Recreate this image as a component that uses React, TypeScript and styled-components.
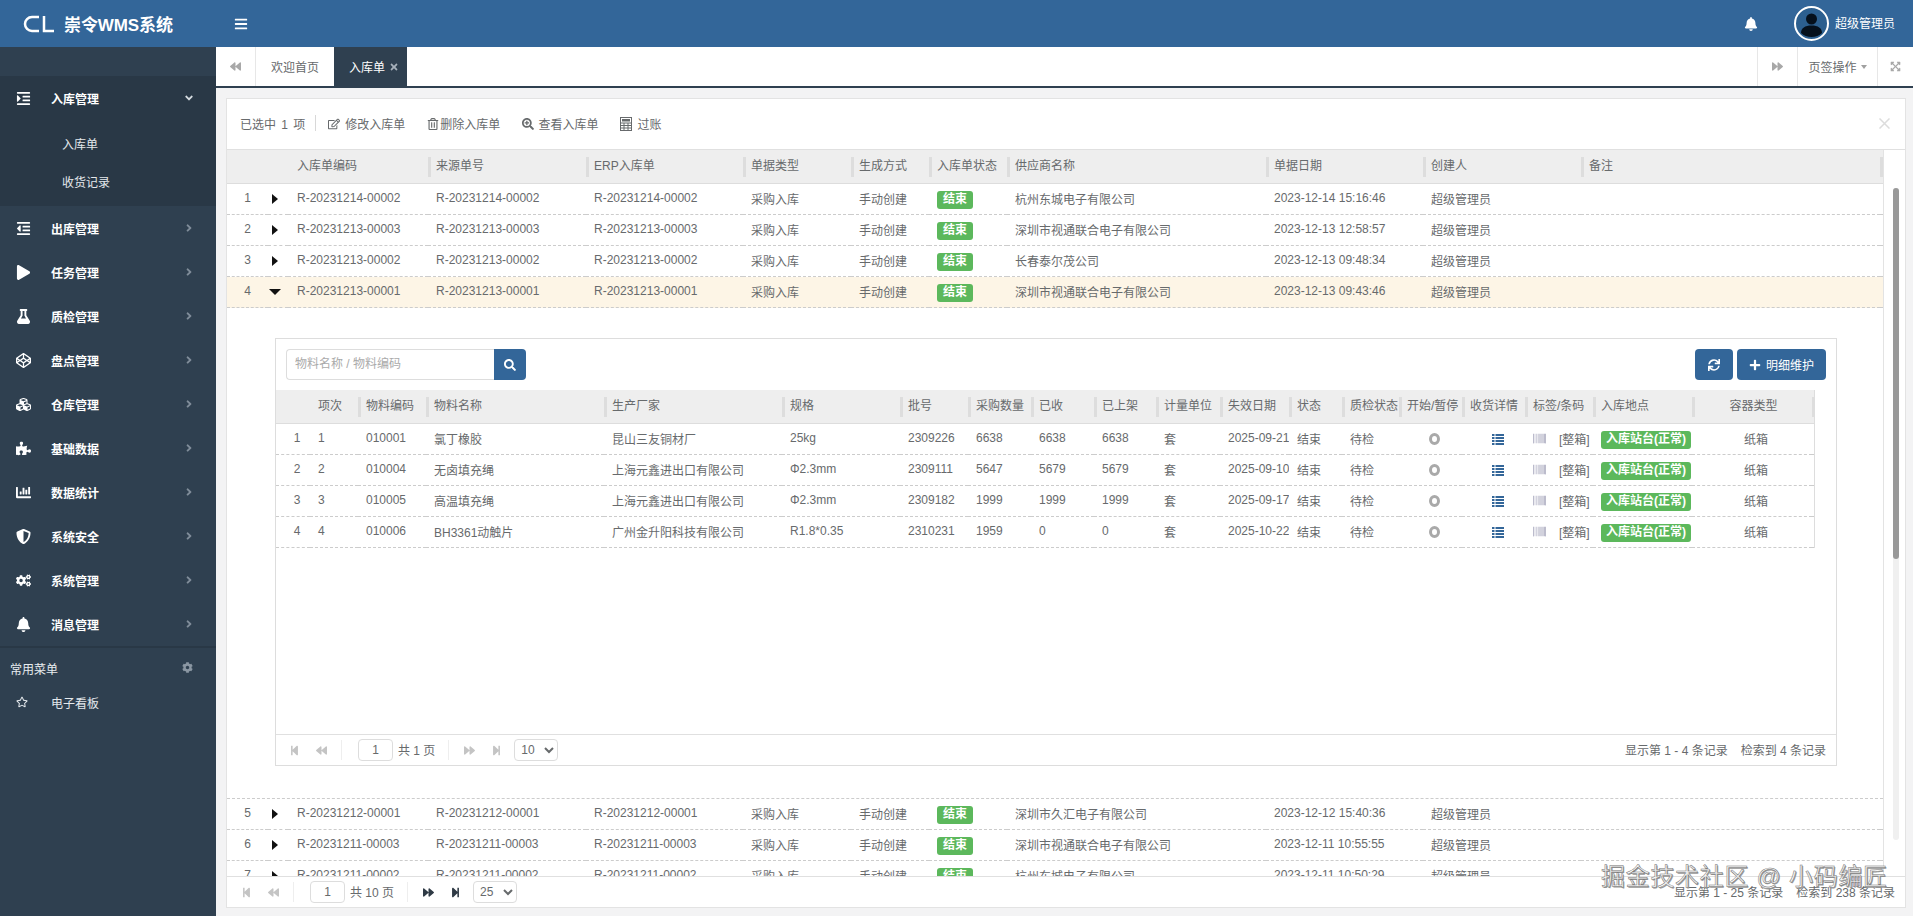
import React from "react";
import styled, { createGlobalStyle } from "styled-components";
import {
  FaAngleDown, FaAngleRight, FaBackward, FaBars, FaBarcode, FaBell, FaChartBar, FaCodepen, FaCog, FaCogs,
  FaCubes, FaExpandArrowsAlt, FaFlask, FaForward, FaIndent, FaOutdent, FaPlay, FaPlus, FaPuzzlePiece, FaRegEdit,
  FaRegStar, FaRegTrashAlt, FaSearch, FaSearchPlus, FaShieldAlt, FaStepBackward, FaStepForward, FaSync, FaTimes,
} from "react-icons/fa";

const Global = createGlobalStyle`
  html, body { margin: 0; height: 100%; overflow: hidden; }
  body { font-family: "Liberation Sans", "Noto Sans CJK SC", sans-serif; font-size: 12px; color: #676a6c; background: #f3f3f4; }
  #root { height: 100%; }
  * { box-sizing: border-box; }
`;

const Page = styled.div`display: flex; flex-direction: column; height: 916px; position: relative;`;
const TopBar = styled.header`height: 47px; flex: none; background: #336699; display: flex; align-items: center; color: #fff;`;
const Brand = styled.div`width: 216px; padding-left: 23px; display: flex; align-items: center; gap: 9px; font-size: 17px; font-weight: 700; letter-spacing: -0.1px;`;
const Burger = styled.span`margin-left: 18px; display: flex; font-size: 14px;`;
const Grow = styled.div`flex: 1;`;
const BellBox = styled.span`display: flex; font-size: 14px; margin-right: 36px;`;
const UserName = styled.span`margin: 0 18px 3px 6px;`;
const Body = styled.div`flex: 1; min-height: 0; display: flex;`;

const Side = styled.nav`width: 216px; flex: none; background: #2f4050; padding-top: 29px; color: #fff;`;
const NavItem = styled.div<{ $dark?: boolean }>`
  height: 44px; display: flex; align-items: center; padding-left: 16px; font-weight: 700;
  background: ${(p) => (p.$dark ? "#293846" : "transparent")};
`;
const NavIcon = styled.span`width: 35px; flex: none; display: flex; font-size: 15px;`;
const NavLabel = styled.span`flex: 1;`;
const NavArrow = styled.span<{ $open?: boolean }>`display: flex; width: 33px; font-size: 12px; color: ${(p) => (p.$open ? "#d5dbe0" : "#7f8c99")};`;
const SubList = styled.div`background: #293846; padding: 6px 0 4px;`;
const SubItem = styled.div`height: 38px; line-height: 38px; padding-left: 62px; color: #e4e8ec;`;
const SideDivider = styled.div`height: 2px; background: #293846;`;
const FavHead = styled.div`height: 40px; display: flex; align-items: center; justify-content: space-between; padding: 0 23px 0 10px; color: #e8ecef;`;
const FavGear = styled.span`display: flex; font-size: 11px; color: #8b97a3; margin-bottom: 2px;`;
const FavItem = styled.div`height: 28px; display: flex; align-items: center; padding-left: 16px; color: #e4e8ec;`;
const FavIcon = styled(NavIcon)`font-size: 12px;`;

const Main = styled.main`flex: 1; min-width: 0; display: flex; flex-direction: column;`;
const Tabs = styled.div`height: 41px; flex: none; background: #fff; border-bottom: 2px solid #2f4050; display: flex;`;
const TabEdge = styled.div<{ $w: number; $left?: boolean }>`
  width: ${(p) => p.$w}px; display: flex; align-items: center; justify-content: center; gap: 4px; color: #a8a8a8; font-size: 11px;
  border-${(p) => (p.$left ? "left" : "right")}: 1px solid #e7e7e7;
`;
const TabLabel = styled.span`font-size: 12px; color: #676a6c;`;
const Caret = styled.span`width: 0; height: 0; border: 3px solid transparent; border-top: 4px solid #a0a0a0; border-bottom: 0;`;
const Tab = styled.div`width: 78px; padding-left: 15px; display: flex; align-items: center;`;
const ActiveTab = styled.div`width: 73px; padding-left: 15px; display: flex; align-items: center; gap: 4px; background: #2f4050; color: #fff;`;
const TabClose = styled.span`display: flex; font-size: 10px; color: #a7b1bb;`;

const Content = styled.div`flex: 1; min-height: 0; padding: 10px 7px 8px 10px; display: flex;`;
const Card = styled.section`flex: 1; min-width: 0; background: #fff; border: 1px solid #e3e3e3; display: flex; flex-direction: column;`;
const Toolbar = styled.div`height: 51px; flex: none; border-bottom: 1px solid #e0e0e0; display: flex; align-items: center; padding: 0 15px 2px 13px; gap: 22px;`;
const Selected = styled.div`display: flex; align-items: center; word-spacing: 2px; margin-right: -10px;`;
const ToolSep = styled.span`width: 1px; height: 16px; background: #d8d8d8; margin-left: 10px;`;
const ToolBtn = styled.span`display: flex; align-items: center;`;
const ToolIcon = styled.span<{ $gap: number }>`display: flex; font-size: 12px; color: #676a6c; margin: 2px ${(p) => p.$gap}px 0 0;`;
const CardClose = styled.svg`margin-left: auto; width: 11px; height: 11px; stroke: #dcdcdc; stroke-width: 1.5; fill: none;`;
const TableArea = styled.div`flex: 1; min-height: 0; display: flex;`;
const TableClip = styled.div`width: 1656px; flex: none; overflow: hidden;`;
const Table = styled.table<{ $w: number }>`width: ${(p) => p.$w}px; table-layout: fixed; border-collapse: separate; border-spacing: 0;`;
const Th = styled.th`height: 34px; padding: 0; background: #eee; border-bottom: 1px solid #ddd; font-weight: 400; text-align: left; color: #676a6c; overflow: hidden; white-space: nowrap;`;
const HeadLabel = styled.span<{ $sep?: boolean; $center?: boolean; $pad?: number }>`
  display: block; height: 20px; line-height: 18px;
  padding-left: ${(p) => p.$pad ?? 5}px;
  border-left: ${(p) => (p.$sep ? "3px solid #ddd" : "0")};
  text-align: ${(p) => (p.$center ? "center" : "left")};
`;
const Tr = styled.tr<{ $active?: boolean }>`background: ${(p) => (p.$active ? "#fdf5e6" : "transparent")};`;
const Td = styled.td<{ $center?: boolean; $pad?: number }>`
  height: 31px; padding: 0 0 2px ${(p) => p.$pad ?? 8}px; border-bottom: 1px dashed #ccc; white-space: nowrap; overflow: hidden;
  text-align: ${(p) => (p.$center ? "center" : "left")};
`;
const Expander = styled.span<{ $open?: boolean }>`
  display: block; width: 0; height: 0; border-style: solid; margin-top: 2px;
  border-color: ${(p) => (p.$open ? "#111 transparent transparent" : "transparent transparent transparent #111")};
  border-width: ${(p) => (p.$open ? "6px 6px 0" : "5px 0 5px 6px")};
  margin-left: ${(p) => (p.$open ? 1 : 4)}px;
`;
const Badge = styled.span<{ $w: number }>`
  display: block; width: ${(p) => p.$w}px; height: 18px; line-height: 17px; margin-top: 4px; text-align: center; background: #5cb85c; color: #fff;
  font-weight: 700; border-radius: 3px;
`;
const Gutter = styled.div`flex: 1; border-left: 1px solid #e3e3e3; padding: 38px 0 36px 9px; display: flex;`;
const Track = styled.div`width: 6px; background: #f0f0f0; border-radius: 3px;`;
const Thumb = styled.div`background: #999; border-radius: 3px;`;
const DetailCell = styled.td`padding: 30px 46px 32px 48px; border-bottom: 1px dashed #ccc;`;
const Detail = styled.div`height: 428px; border: 1px solid #ddd; display: flex; flex-direction: column;`;
const DetailBar = styled.div`height: 51px; flex: none; padding: 10px 10px 0 10px; display: flex; justify-content: space-between;`;
const SearchGroup = styled.div`display: flex; height: 31px;`;
const SearchInput = styled.input`
  width: 208px; border: 1px solid #ddd; border-right: 0; border-radius: 4px 0 0 4px; padding: 0 8px 2px; font: inherit; outline: 0;
  &::placeholder { color: #aaa; opacity: 1; }
`;
const Primary = styled.span<{ $w: number; $round?: boolean }>`
  width: ${(p) => p.$w}px; height: 31px; background: #336699; color: #fff; display: flex; align-items: center; justify-content: center; gap: 5px;
  border-radius: ${(p) => (p.$round ? "4px" : "0 4px 4px 0")}; font-size: 12px;
`;
const BtnGroup = styled.div`display: flex; gap: 4px;`;
const DetailBody = styled.div`flex: 1; min-height: 0;`;
const InnerTable = styled(Table)`border-right: 1px solid #ddd;`;
const Ring = styled.span`display: inline-block; width: 11px; height: 12px; margin-top: 2px; border: 3px solid #a9a9a9; border-radius: 50%; vertical-align: middle;`;
const ListIcon = styled.span`display: inline-flex; margin-top: 2px; color: #336699; vertical-align: middle;`;
const BarcodeWrap = styled.span`display: flex; align-items: center; gap: 13px;`;
const BarcodeIcon = styled.span`display: flex; font-size: 13px; color: #9d9db5;`;

const PageBar = styled.div<{ $pad: number }>`
  height: 31px; flex: none; border-top: 1px solid #e0e0e0; display: flex; align-items: center;
  padding: 0 10px 0 ${(p) => p.$pad}px;
`;
const PageBtn = styled.span<{ $on?: boolean }>`width: 27px; display: flex; justify-content: center; font-size: 11px; color: ${(p) => (p.$on ? "#2f3a45" : "#c4c4c4")};`;
const PageSep = styled.span<{ $l: number }>`width: 1px; height: 20px; background: #eee; margin: 0 7px 0 ${(p) => p.$l}px;`;
const PageInput = styled.input`width: 35px; height: 22px; margin-left: 9px; border: 1px solid #ddd; border-radius: 4px; text-align: center; font: inherit; color: #676a6c; padding: 0; outline: 0;`;
const PageTotal = styled.span`margin: 0 0 2px 5px;`;
const PageSelect = styled.select`width: 44px; height: 22px; margin-left: 4px; border: 1px solid #ddd; border-radius: 4px; background: #fff; font: inherit; color: #676a6c; padding: 0 0 0 2px; outline: 0;`;
const PageInfo = styled.span`margin: 0 0 2px auto; display: flex; gap: 13px;`;

const Watermark = styled.div`
  position: absolute; left: 1601px; top: 863px; font-size: 24px; line-height: 28px; letter-spacing: 0.7px; white-space: nowrap;
  color: rgba(255, 255, 255, 0.8); -webkit-text-stroke: 0.5px #707070; text-shadow: 1px 1px 0 #999;
`;

const CLLogo = () => (
  <svg width="32" height="18" viewBox="0 0 32 18" fill="none" stroke="#fff" strokeWidth="2.5">
    <path d="M16 2H9a7 7 0 0 0 0 14h7" />
    <path d="M21 1v15h10" />
  </svg>
);
const Avatar = () => (
  <svg width="35" height="35" viewBox="0 0 35 35">
    <circle cx="17.5" cy="17.5" r="16.5" fill="#2c5f8f" stroke="#fff" strokeWidth="2" />
    <circle cx="17.5" cy="13" r="5.5" fill="#05101c" />
    <path d="M7 27c0-5 4-7.500 10.500-7.500S28 22 28 27c-2.500 2.500-6.500 4-10.500 4S9.500 29.500 7 27z" fill="#05101c" />
  </svg>
);
const CalcIcon = () => (
  <svg width="12" height="14" viewBox="0 0 12 14" fill="none" stroke="#676a6c" strokeWidth="1">
    <rect x="0.5" y="0.5" width="11" height="13" />
    <rect x="2" y="2" width="8" height="2.500" fill="#676a6c" stroke="none" />
    <path d="M0.500 6h11M0.500 8.500h11M0.500 11h11M4 6v7.500M8 6v7.500" />
  </svg>
);
const StripeList = () => (
  <svg width="12" height="11" viewBox="0 0 12 11" fill="currentColor">
    <path d="M0 0h2.500v2H0zM3.500 0H12v2H3.500zM0 3h2.500v2H0zM3.500 3H12v2H3.500zM0 6h2.500v2H0zM3.500 6H12v2H3.500zM0 9h2.500v2H0zM3.500 9H12v2H3.500z" />
  </svg>
);

const navItems: [string, React.ReactNode][] = [
  ["任务管理", <FaPlay />], ["质检管理", <FaFlask />], ["盘点管理", <FaCodepen />], ["仓库管理", <FaCubes />], ["基础数据", <FaPuzzlePiece />],
  ["数据统计", <FaChartBar />], ["系统安全", <FaShieldAlt />], ["系统管理", <FaCogs />], ["消息管理", <FaBell />],
];

const mainCols = [41, 20, 140, 158, 157, 108, 78, 78, 259, 157, 158, 299, 3];
const mainHeads = ["入库单编码", "来源单号", "ERP入库单", "单据类型", "生成方式", "入库单状态", "供应商名称", "单据日期", "创建人", "备注"];
const orders: [string, string, string][] = [
  ["R-20231214-00002", "杭州东城电子有限公司", "2023-12-14 15:16:46"],
  ["R-20231213-00003", "深圳市视通联合电子有限公司", "2023-12-13 12:58:57"],
  ["R-20231213-00002", "长春泰尔茂公司", "2023-12-13 09:48:34"],
  ["R-20231213-00001", "深圳市视通联合电子有限公司", "2023-12-13 09:43:46"],
  ["R-20231212-00001", "深圳市久汇电子有限公司", "2023-12-12 15:40:36"],
  ["R-20231211-00003", "深圳市视通联合电子有限公司", "2023-12-11 10:55:55"],
  ["R-20231211-00002", "杭州东城电子有限公司", "2023-12-11 10:50:29"],
];

const innerCols = [34, 48, 68, 178, 178, 118, 68, 63, 63, 62, 64, 69, 53, 57, 63, 63, 68, 99, 120, 2];
const innerHeads = ["项次", "物料编码", "物料名称", "生产厂家", "规格", "批号", "采购数量", "已收", "已上架", "计量单位", "失效日期", "状态", "质检状态", "开始/暂停", "收货详情", "标签/条码", "入库地点"];
const items = [
  ["010001", "氯丁橡胶", "昆山三友铜材厂", "25kg", "2309226", "6638", "6638", "6638", "2025-09-21"],
  ["010004", "无卤填充绳", "上海元鑫进出口有限公司", "Φ2.3mm", "2309111", "5647", "5679", "5679", "2025-09-10"],
  ["010005", "高温填充绳", "上海元鑫进出口有限公司", "Φ2.3mm", "2309182", "1999", "1999", "1999", "2025-09-17"],
  ["010006", "BH3361动触片", "广州金升阳科技有限公司", "R1.8*0.35", "2310231", "1959", "0", "0", "2025-10-22"],
];

const Colgroup = ({ widths }: { widths: number[] }) => (
  <colgroup>{widths.map((w, i) => <col key={i} width={w} />)}</colgroup>
);

const Pager = ({ pad, total, size, on, info }: { pad: number; total: string; size: number; on?: boolean; info: [string, string] }) => (
  <PageBar $pad={pad}>
    <PageBtn><FaStepBackward /></PageBtn>
    <PageBtn><FaBackward /></PageBtn>
    <PageSep $l={6} />
    <PageInput defaultValue="1" />
    <PageTotal>{total}</PageTotal>
    <PageSep $l={13} />
    <PageBtn $on={on}><FaForward /></PageBtn>
    <PageBtn $on={on}><FaStepForward /></PageBtn>
    <PageSelect defaultValue={size}><option>{size}</option></PageSelect>
    <PageInfo><span>{info[0]}</span><span>{info[1]}</span></PageInfo>
  </PageBar>
);

const DetailPanel = () => (
  <Detail>
    <DetailBar>
      <SearchGroup>
        <SearchInput placeholder="物料名称 / 物料编码" />
        <Primary $w={32}><FaSearch /></Primary>
      </SearchGroup>
      <BtnGroup>
        <Primary $w={38} $round><FaSync /></Primary>
        <Primary $w={89} $round><FaPlus />明细维护</Primary>
      </BtnGroup>
    </DetailBar>
    <DetailBody>
      <InnerTable $w={1539}>
        <Colgroup widths={innerCols} />
        <thead>
          <tr>
            <Th />
            {innerHeads.map((h, i) => <Th key={h}><HeadLabel $sep={i > 0} $pad={i > 0 ? 5 : 8}>{h}</HeadLabel></Th>)}
            <Th><HeadLabel $sep $center $pad={0}>容器类型</HeadLabel></Th>
            <Th><HeadLabel $sep $pad={0} /></Th>
          </tr>
        </thead>
        <tbody>
          {items.map((r, i) => (
            <tr key={r[0]}>
              <Td $center>{i + 1}</Td>
              <Td>{i + 1}</Td>
              {r.slice(0, 8).map((v, j) => <Td key={j}>{v}</Td>)}
              <Td>套</Td>
              <Td>{r[8]}</Td>
              <Td>结束</Td>
              <Td>待检</Td>
              <Td $center><Ring /></Td>
              <Td $center><ListIcon><StripeList /></ListIcon></Td>
              <Td><BarcodeWrap><BarcodeIcon><FaBarcode /></BarcodeIcon>[整箱]</BarcodeWrap></Td>
              <Td><Badge $w={90}>入库站台(正常)</Badge></Td>
              <Td $center>纸箱</Td>
              <Td $pad={0} />
            </tr>
          ))}
        </tbody>
      </InnerTable>
    </DetailBody>
    <Pager pad={5} total="共 1 页" size={10} info={["显示第 1 - 4 条记录", "检索到 4 条记录"]} />
  </Detail>
);

export default function App() {
  return (
    <Page>
      <Global />
      <TopBar>
        <Brand><CLLogo />崇令WMS系统</Brand>
        <Burger><FaBars /></Burger>
        <Grow />
        <BellBox><FaBell /></BellBox>
        <Avatar />
        <UserName>超级管理员</UserName>
      </TopBar>
      <Body>
        <Side>
          <NavItem $dark>
            <NavIcon><FaIndent /></NavIcon><NavLabel>入库管理</NavLabel><NavArrow $open><FaAngleDown /></NavArrow>
          </NavItem>
          <SubList><SubItem>入库单</SubItem><SubItem>收货记录</SubItem></SubList>
          <NavItem>
            <NavIcon><FaOutdent /></NavIcon><NavLabel>出库管理</NavLabel><NavArrow><FaAngleRight /></NavArrow>
          </NavItem>
          {navItems.map(([label, icon]) => (
            <NavItem key={label}>
              <NavIcon>{icon}</NavIcon><NavLabel>{label}</NavLabel><NavArrow><FaAngleRight /></NavArrow>
            </NavItem>
          ))}
          <SideDivider />
          <FavHead>常用菜单<FavGear><FaCog /></FavGear></FavHead>
          <FavItem><FavIcon><FaRegStar /></FavIcon>电子看板</FavItem>
        </Side>
        <Main>
          <Tabs>
            <TabEdge $w={40}><FaBackward /></TabEdge>
            <Tab><TabLabel>欢迎首页</TabLabel></Tab>
            <ActiveTab>入库单<TabClose><FaTimes /></TabClose></ActiveTab>
            <Grow />
            <TabEdge $w={40} $left><FaForward /></TabEdge>
            <TabEdge $w={80} $left><TabLabel>页签操作</TabLabel><Caret /></TabEdge>
            <TabEdge $w={36} $left><FaExpandArrowsAlt /></TabEdge>
          </Tabs>
          <Content>
            <Card>
              <Toolbar>
                <Selected>已选中 1 项<ToolSep /></Selected>
                <ToolBtn><ToolIcon $gap={5}><FaRegEdit /></ToolIcon>修改入库单</ToolBtn>
                <ToolBtn><ToolIcon $gap={1}><FaRegTrashAlt /></ToolIcon>删除入库单</ToolBtn>
                <ToolBtn><ToolIcon $gap={4}><FaSearchPlus /></ToolIcon>查看入库单</ToolBtn>
                <ToolBtn><ToolIcon $gap={5}><CalcIcon /></ToolIcon>过账</ToolBtn>
                <CardClose viewBox="0 0 11 11"><path d="M0.5 0.5l10 10M10.500 0.500l-10 10" /></CardClose>
              </Toolbar>
              <TableArea>
                <TableClip>
                  <Table $w={1656}>
                    <Colgroup widths={mainCols} />
                    <thead>
                      <tr>
                        <Th /><Th />
                        {mainHeads.map((h, i) => <Th key={h}><HeadLabel $sep={i > 0} $pad={i > 0 ? 5 : 9}>{h}</HeadLabel></Th>)}
                        <Th><HeadLabel $sep $pad={0} /></Th>
                      </tr>
                    </thead>
                    <tbody>
                      {orders.map((o, i) => (
                        <React.Fragment key={o[0]}>
                          <Tr $active={i === 3}>
                            <Td $center $pad={0}>{i + 1}</Td>
                            <Td $pad={0}><Expander $open={i === 3} /></Td>
                            <Td $pad={9}>{o[0]}</Td>
                            <Td>{o[0]}</Td>
                            <Td>{o[0]}</Td>
                            <Td>采购入库</Td>
                            <Td>手动创建</Td>
                            <Td><Badge $w={36}>结束</Badge></Td>
                            <Td>{o[1]}</Td>
                            <Td>{o[2]}</Td>
                            <Td>超级管理员</Td>
                            <Td />
                            <Td $pad={0} />
                          </Tr>
                          {i === 3 && (
                            <tr><DetailCell colSpan={13}><DetailPanel /></DetailCell></tr>
                          )}
                        </React.Fragment>
                      ))}
                    </tbody>
                  </Table>
                </TableClip>
                <Gutter>
                  <Track><Thumb style={{ height: 371 }} /></Track>
                </Gutter>
              </TableArea>
              <Pager pad={6} total="共 10 页" size={25} on info={["显示第 1 - 25 条记录", "检索到 238 条记录"]} />
            </Card>
          </Content>
        </Main>
      </Body>
      <Watermark>掘金技术社区 @ 小码编匠</Watermark>
    </Page>
  );
}
